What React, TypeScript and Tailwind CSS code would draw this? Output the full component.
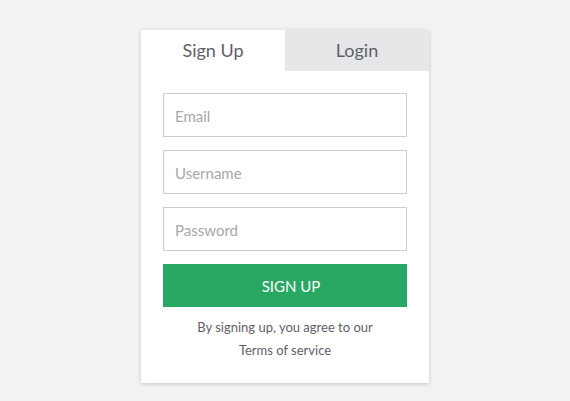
export default function App() {
  return (
    <div className="min-h-[401px] bg-[#f1f2f1] flex justify-center pt-[30px] font-['Lato',sans-serif]">
      <div className="w-[288px] h-[353px] bg-white shadow-[0_1px_4px_rgba(0,0,0,0.18)] flex flex-col">
        <div className="flex h-[41px]">
          <div className="flex-1 flex items-center justify-center text-[18px] text-[#5f5f6a]">Sign Up</div>
          <div className="flex-1 flex items-center justify-center text-[18px] text-[#5f5f6a] bg-[#e6e7e8]">Login</div>
        </div>
        <div className="px-[22px] pt-[22px] flex flex-col gap-[13px]">
          <input
            placeholder="Email"
            className="h-[44px] w-full border border-[#cccccc] px-[11px] pt-[2px] text-[15px] text-[#555] placeholder:text-[#a8a8a8] outline-none"
          />
          <input
            placeholder="Username"
            className="h-[44px] w-full border border-[#cccccc] px-[11px] pt-[2px] text-[15px] text-[#555] placeholder:text-[#a8a8a8] outline-none"
          />
          <input
            type="password"
            placeholder="Password"
            className="h-[44px] w-full border border-[#cccccc] px-[11px] pt-[2px] text-[15px] text-[#555] placeholder:text-[#a8a8a8] outline-none"
          />
          <button className="h-[43px] w-full bg-[#28a862] text-white text-[15px] pl-[12px] pt-[2px]">SIGN UP</button>
        </div>
        <div className="pt-[9px] text-center text-[13px] leading-[23px] text-[#5f5f6a]">
          <p>By signing up, you agree to our</p>
          <p>Terms of service</p>
        </div>
      </div>
    </div>
  )
}
